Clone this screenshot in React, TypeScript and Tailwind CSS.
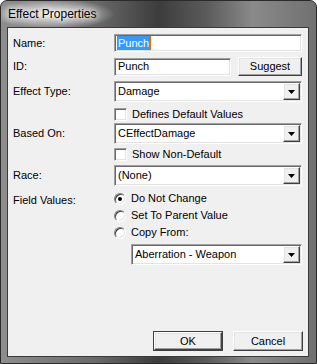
const sunken =
  "border border-t-[#a0a0a0] border-l-[#a0a0a0] border-b-white border-r-white shadow-[inset_1px_1px_0_#696969,inset_-1px_-1px_0_#e3e3e3] bg-white"
const raised =
  "border border-t-white border-l-white border-b-[#404040] border-r-[#404040] shadow-[inset_-1px_-1px_0_#a0a0a0,inset_1px_1px_0_#e3e3e3] bg-[#f0f0f0]"

function Label({ children }: { children: React.ReactNode }) {
  return <div className="w-[106px] shrink-0 pl-[5px]">{children}</div>
}

function Select({ value, className = "" }: { value: string; className?: string }) {
  return (
    <div className={`h-[21px] flex items-stretch ${sunken} ${className}`}>
      <div className="flex-1 flex items-center pl-[3px]">{value}</div>
      <div className={`w-[17px] m-[1px] flex items-center justify-center ${raised}`}>
        <svg width="7" height="4" viewBox="0 0 7 4">
          <path d="M0 0h7L3.5 4z" fill="#000" />
        </svg>
      </div>
    </div>
  )
}

function Check({ label }: { label: string }) {
  return (
    <div className="h-[13px] flex items-center">
      <div className="w-[106px] shrink-0" />
      <div className={`w-[13px] h-[13px] ${sunken}`} />
      <span className="ml-[5px]">{label}</span>
    </div>
  )
}

function Radio({ label, checked = false }: { label: string; checked?: boolean }) {
  return (
    <div className="h-[13px] flex items-center">
      <div className="w-[12px] h-[12px] rounded-full bg-white border border-t-[#808080] border-l-[#808080] border-b-white border-r-white shadow-[inset_1px_1px_0_#404040,inset_-1px_-1px_0_#e3e3e3] flex items-center justify-center">
        {checked && <div className="w-[4px] h-[4px] rounded-full bg-black" />}
      </div>
      <span className="ml-[5px]">{label}</span>
    </div>
  )
}

export default function App() {
  return (
    <div className="w-[317px] h-[364px] flex flex-col rounded-t-[7px] border border-[#2a2a2a] bg-[linear-gradient(to_right,#8e8e8e,#6a6a6a_30%,#3c3c3c_50%,#5a5a5a_65%,#8a8a8a_80%,#707070)] font-['Liberation_Sans',sans-serif] text-[11px] text-black">
      <div className="h-[26px] shrink-0 flex items-center pl-[7px] rounded-t-[6px] bg-[radial-gradient(ellipse_62px_15px_at_52px_13px,rgba(255,255,255,0.85),rgba(255,255,255,0.3)_70%,transparent)]">
        <span className="text-[12px] [text-shadow:0_0_6px_#fff,0_0_6px_#fff]">Effect Properties</span>
      </div>
      <div className="flex-1 ml-[6px] mr-[7px] mb-[6px] border border-[#3a3a3a] bg-[#f0f0f0] flex flex-col pr-[6px]">
        <div className="mt-[6px] h-[18px] flex items-center">
          <Label>Name:</Label>
          <div className={`flex-1 h-[18px] flex items-center pl-[2px] ${sunken}`}>
            <span className="bg-[#3399ff] text-white px-[1px] leading-[14px]">Punch</span>
            <span className="w-[1px] h-[14px] bg-[#e07000]" />
          </div>
        </div>
        <div className="mt-[5px] h-[19px] flex items-center">
          <Label>ID:</Label>
          <div className={`w-[117px] h-[18px] flex items-center pl-[3px] ${sunken}`}>Punch</div>
          <button className={`ml-[7px] flex-1 h-[19px] ${raised}`}>Suggest</button>
        </div>
        <div className="mt-[5px] flex items-center">
          <Label>Effect Type:</Label>
          <Select value="Damage" className="flex-1" />
        </div>
        <div className="mt-[6px]">
          <Check label="Defines Default Values" />
        </div>
        <div className="mt-[2px] flex items-center">
          <Label>Based On:</Label>
          <Select value="CEffectDamage" className="flex-1" />
        </div>
        <div className="mt-[4px]">
          <Check label="Show Non-Default" />
        </div>
        <div className="mt-[4px] flex items-center">
          <Label>Race:</Label>
          <Select value="(None)" className="flex-1" />
        </div>
        <div className="mt-[6px] flex">
          <Label>Field Values:</Label>
          <div className="flex-1 flex flex-col gap-[4px]">
            <Radio label="Do Not Change" checked />
            <Radio label="Set To Parent Value" />
            <Radio label="Copy From:" />
            <Select value="Aberration - Weapon" className="ml-[17px] mt-[1px]" />
          </div>
        </div>
        <div className="mt-auto mb-[5px] flex justify-end gap-[10px] -mr-[1px]">
          <button className="w-[70px] h-[20px] border border-[#404040] bg-[#f0f0f0]">
            <div className={`w-full h-full flex items-center justify-center ${raised}`}>OK</div>
          </button>
          <button className={`w-[70px] h-[20px] ${raised}`}>Cancel</button>
        </div>
      </div>
    </div>
  )
}
